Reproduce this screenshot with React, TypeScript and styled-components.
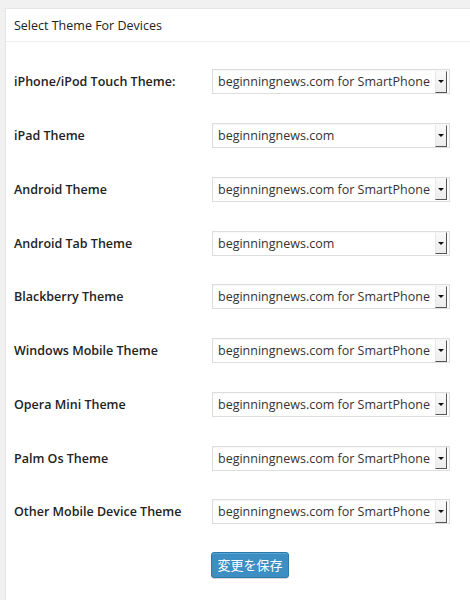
import React from "react";
import styled, { createGlobalStyle } from "styled-components";

const Global = createGlobalStyle`
  html, body { margin: 0; padding: 0; background: #f1f1f1; overflow: hidden; }
  body { font-family: "Open Sans", "Noto Sans", "Noto Sans CJK JP", sans-serif; color: #333; }
`;

const Frame = styled.div`
  width: 470px;
  height: 600px;
  overflow: hidden;
`;

const Panel = styled.div`
  margin: 8px 0 0 5px;
  width: 490px;
  background: #fff;
  border: 1px solid #e5e5e5;
  box-sizing: border-box;
`;

const Header = styled.h3`
  margin: 0;
  height: 33px;
  box-sizing: border-box;
  border-bottom: 1px solid #eee;
  padding: 0 8px;
  display: flex;
  align-items: center;
  font-size: 12.5px;
  font-weight: 400;
  color: #222;
`;

const Body = styled.div`
  padding: 13px 0 22px 8px;
`;

const Rows = styled.div`
  display: grid;
  grid-template-columns: 198px 238px;
  grid-auto-rows: 53.75px;
  align-items: center;
`;

const Label = styled.label`
  font-size: 12.5px;
  font-weight: 600;
  color: #222;
`;

const Select = styled.div`
  height: 25px;
  box-sizing: border-box;
  border: 1px solid #ddd;
  background: #fff;
  display: flex;
  align-items: center;
  padding: 0 2px 0 5px;
  box-shadow: inset 0 1px 2px rgba(0,0,0,0.04);
`;

const SelectText = styled.span`
  flex: 1;
  font-size: 12.5px;
  color: #333;
  white-space: nowrap;
  overflow: hidden;
`;

const Arrow = styled.span`
  flex: none;
  width: 12px;
  height: 22px;
  box-sizing: border-box;
  border-right: 1px solid #555;
  border-bottom: 1px solid #555;
  border-left: 1px solid #e6e6e6;
  border-top: 1px solid #f4f4f4;
  background: linear-gradient(#fafafa, #ececec);
  display: flex;
  align-items: center;
  justify-content: center;
  &::after {
    content: "";
    border-left: 3px solid transparent;
    border-right: 3px solid transparent;
    border-top: 3px solid #111;
  }
`;

const Footer = styled.div`
  display: flex;
  justify-content: center;
  padding-top: 13px;
  margin-left: -8px;
`;

const Button = styled.button`
  width: 78px;
  height: 26px;
  box-sizing: border-box;
  border: 1px solid #2c78a8;
  border-radius: 3px;
  background: #3c8ec3;
  color: #fff;
  font-family: "Noto Sans CJK JP", sans-serif;
  font-size: 13px;
  padding: 0;
  box-shadow: inset 0 1px 0 rgba(120,200,230,0.4), 0 1px 0 rgba(0,0,0,0.15);
`;

const SP = "beginningnews.com for SmartPhone";
const PC = "beginningnews.com";

const rows: [string, string][] = [
  ["iPhone/iPod Touch Theme:", SP],
  ["iPad Theme", PC],
  ["Android Theme", SP],
  ["Android Tab Theme", PC],
  ["Blackberry Theme", SP],
  ["Windows Mobile Theme", SP],
  ["Opera Mini Theme", SP],
  ["Palm Os Theme", SP],
  ["Other Mobile Device Theme", SP],
];

export default function App() {
  return (
    <Frame>
      <Global />
      <Panel>
        <Header>Select Theme For Devices</Header>
        <Body>
          <Rows>
            {rows.map(([label, value]) => (
              <React.Fragment key={label}>
                <Label>{label}</Label>
                <Select>
                  <SelectText>{value}</SelectText>
                  <Arrow />
                </Select>
              </React.Fragment>
            ))}
          </Rows>
          <Footer>
            <Button>変更を保存</Button>
          </Footer>
        </Body>
      </Panel>
    </Frame>
  );
}
